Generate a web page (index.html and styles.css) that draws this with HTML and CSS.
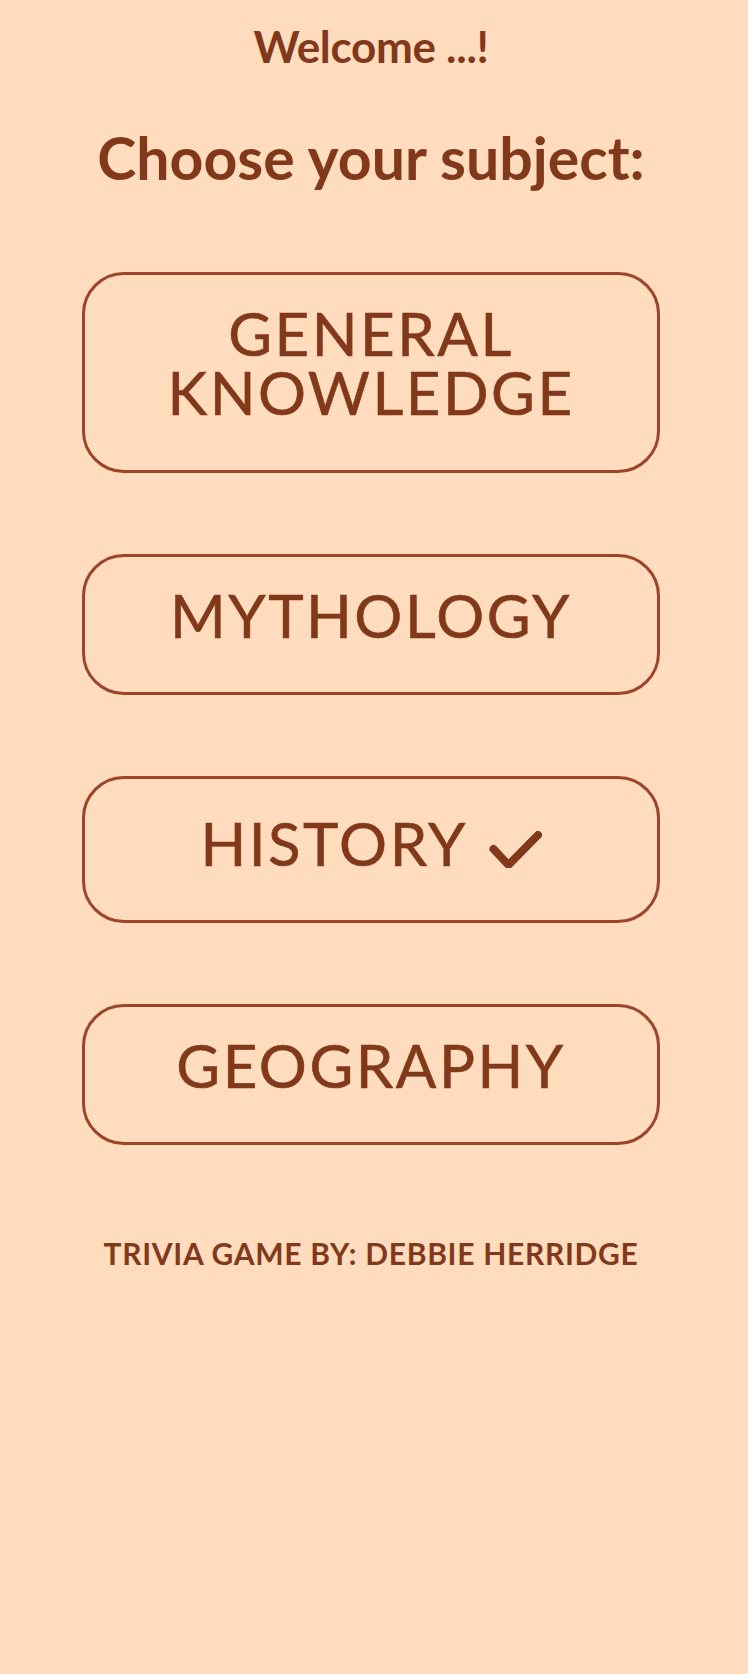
FILE: index.html
```html
<!DOCTYPE html>
<html lang="en">
<head>
<meta charset="utf-8">
<title>Trivia Game</title>
<link rel="stylesheet" href="styles.css">
</head>
<body>
<main class="page">
  <h2 class="welcome">Welcome ...!</h2>
  <h1 class="title">Choose your subject:</h1>
  <div class="subjects">
    <button class="subject subject--double"><span class="line">GENERAL</span><span class="line">KNOWLEDGE</span></button>
    <button class="subject">MYTHOLOGY</button>
    <button class="subject subject--done">HISTORY <svg class="check" viewBox="0 0 53 37" width="53" height="37" aria-hidden="true"><polyline points="4.5,18 19.5,34 49,4" fill="none" stroke="currentColor" stroke-width="8" stroke-linecap="round" stroke-linejoin="round"/></svg></button>
    <button class="subject">GEOGRAPHY</button>
  </div>
  <footer class="credit">TRIVIA GAME BY: DEBBIE HERRIDGE</footer>
</main>
</body>
</html>
```
FILE: styles.css
```css
html, body {
  margin: 0;
  padding: 0;
  background: #fedcbd;
}

body {
  font-family: "Lato", "Open Sans", sans-serif;
  color: #82391b;
  min-height: 1674px;
}

.page {
  width: 742px;
  padding-top: 16px;
  display: flex;
  flex-direction: column;
  align-items: center;
}

.welcome {
  margin: 0;
  font-size: 44px;
  font-weight: 700;
  line-height: 60px;
  letter-spacing: -0.3px;
}

.title {
  margin: 47px 0 0;
  font-size: 59px;
  font-weight: 700;
  line-height: 70px;
}

.subjects {
  margin-top: 79px;
  display: flex;
  flex-direction: column;
  gap: 81px;
}

.subject {
  box-sizing: border-box;
  width: 578px;
  border: 3px solid #9c452a;
  border-radius: 42px;
  background: transparent;
  color: #82391b;
  font-family: "Lato", "Open Sans", sans-serif;
  font-size: 60px;
  font-weight: 400;
  line-height: 59px;
  letter-spacing: 2.5px;
  -webkit-text-stroke: 0.6px currentColor;
  padding: 29px 10px 47px;
  text-align: center;
  cursor: pointer;
}

.line {
  display: block;
}

.subject--double {
  padding-bottom: 48px;
}

.subject--done {
  padding-top: 35px;
  padding-bottom: 47px;
}

.check {
  display: inline-block;
  vertical-align: -2px;
  margin-left: 5px;
  -webkit-text-stroke: 0;
}

.credit {
  margin-top: 90px;
  font-size: 30px;
  font-weight: 700;
  line-height: 36px;
  letter-spacing: 0.7px;
}
```
